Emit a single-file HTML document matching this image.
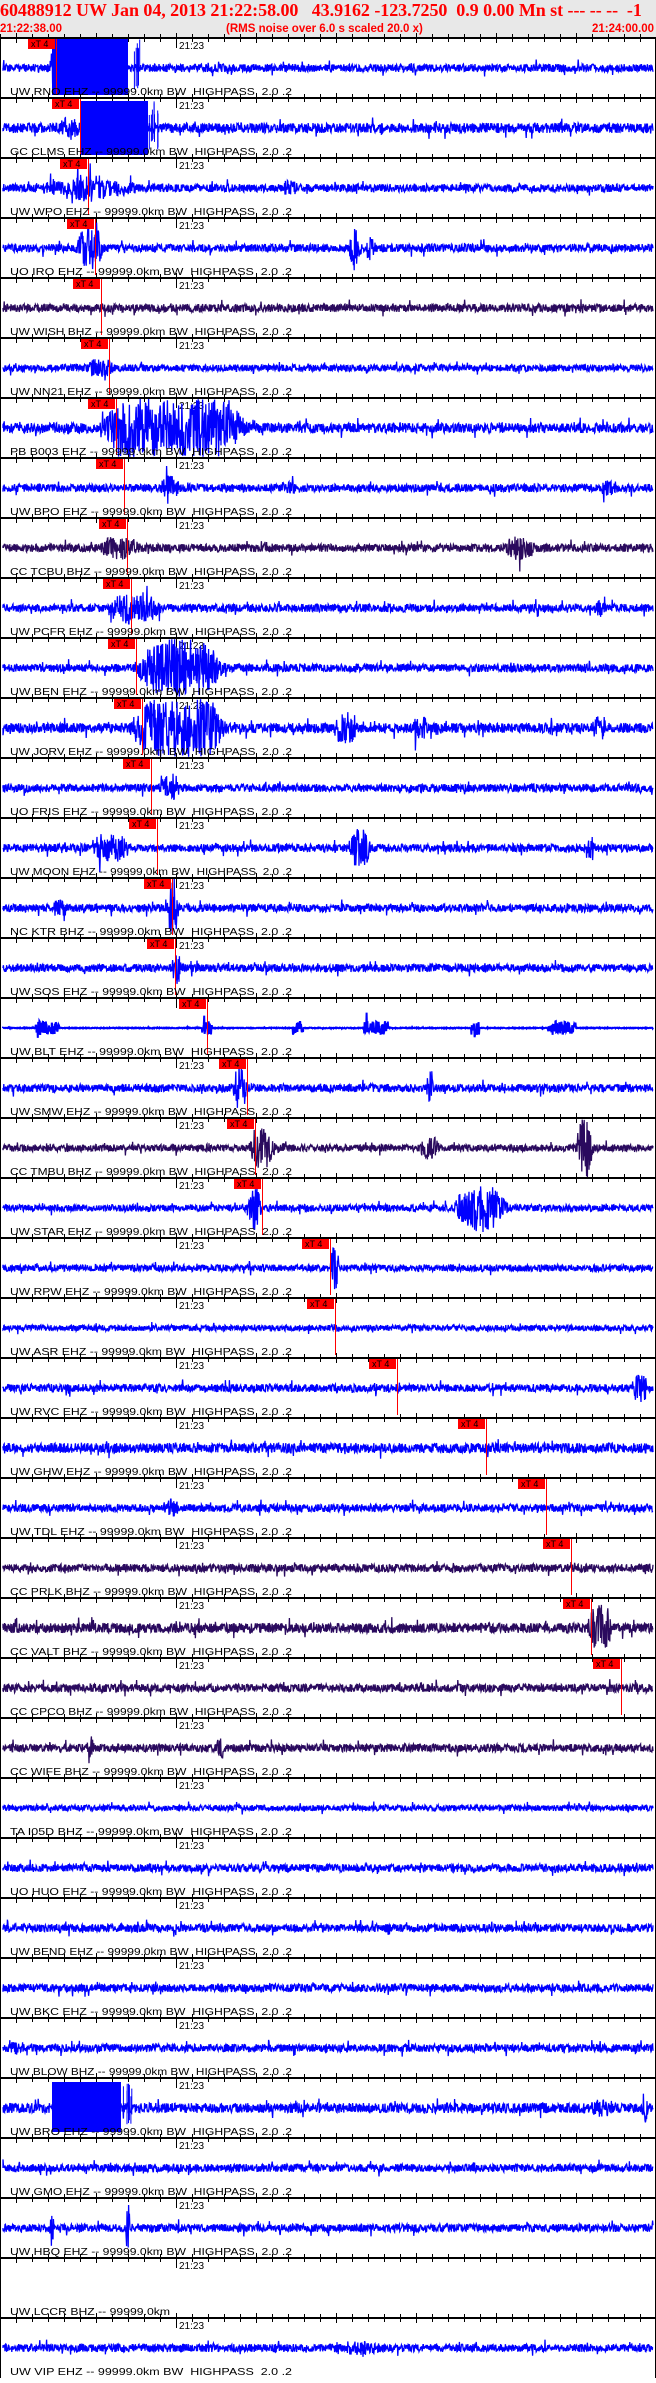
<!DOCTYPE html>
<html><head><meta charset="utf-8"><style>
html,body{margin:0;padding:0;background:#fff;width:656px;height:2378px;overflow:hidden}
#hdr{position:absolute;left:0;top:0;width:656px;height:37px;background:#e8e8e8}
#l1{position:absolute;left:0;top:0px;font:bold 18px "Liberation Serif",serif;color:#f00;white-space:pre;letter-spacing:-0.05px}
#l2{position:absolute;left:0;top:23px;width:656px;font:bold 11.5px "Liberation Sans",sans-serif;color:#f00}
#wrap{position:absolute;left:0;top:0;width:656px;height:2378px}
</style></head><body>
<div id="hdr"><div id="l1">60488912 UW Jan 04, 2013 21:22:58.00   43.9162 -123.7250  0.9 0.00 Mn st --- -- --  -1</div>
<div id="l2"><span style="position:absolute;left:0">21:22:38.00</span><span style="position:absolute;left:226px">(RMS noise over 6.0 s scaled 20.0 x)</span><span style="position:absolute;right:2px">21:24:00.00</span></div></div>
<div id="wrap"></div>
<script>
(function(){
var names=["UW RNO EHZ","GC CLMS EHZ","UW WPO EHZ","UO IRO EHZ","UW WISH BHZ","UW NN21 EHZ","PB B003 EHZ","UW BPO EHZ","CC TCBU BHZ","UW PCFR EHZ","UW BEN EHZ","UW JORV EHZ","UO FRIS EHZ","UW MOON EHZ","NC KTR BHZ","UW SOS EHZ","UW BLT EHZ","UW SMW EHZ","CC TMBU BHZ","UW STAR EHZ","UW RPW EHZ","UW ASR EHZ","UW RVC EHZ","UW GHW EHZ","UW TDL EHZ","CC PRLK BHZ","CC VALT BHZ","CC CPCO BHZ","CC WIFE BHZ","TA I05D BHZ","UO HUO EHZ","UW BEND EHZ","UW BKC EHZ","UW BLOW BHZ","UW BRO EHZ","UW GMO EHZ","UW HBQ EHZ","UW LCCR BHZ","UW VIP EHZ"];
var picks=[56,80,88,95,101,109,116,124,127,131,136,142,151,157,172,175,207,247,255,262,330,335,397,486,546,571,591,621];
var dark={4:1,8:1,18:1,25:1,26:1,27:1,28:1};
var base=[4,5,4,4,4,3.5,5,4,4,4,4,5,4,4,4,4,0.7,4,3.5,3.5,3.5,3,4,5,4,4,5,4,4,3,4,4,4,4,5,4,4,0,4];
var ev={0:[[56,6,25]],1:[[70,10,12]],2:[[90,20,14],[60,30,7],[110,30,8],[290,8,8]],3:[[90,12,22],[355,6,20],[370,4,14]],5:[[100,15,9]],6:[[174,60,60]],7:[[170,10,12],[290,10,7],[610,10,8]],8:[[120,20,12],[520,15,12]],9:[[135,25,16],[600,6,9]],10:[[180,40,29]],11:[[178,40,50],[345,12,16],[420,8,12],[600,8,12]],12:[[170,10,12]],13:[[110,20,14],[360,10,20],[590,5,14]],14:[[173,5,27],[60,8,9]],15:[[177,5,16]],17:[[240,6,24],[430,3,20]],18:[[262,12,20],[585,8,30],[430,10,12]],19:[[480,25,24],[255,6,22]],20:[[335,4,24]],22:[[640,8,14]],24:[[170,10,9]],26:[[600,12,24]],28:[[90,3,18],[220,3,12]],33:[[15,5,7]],34:[[600,10,9],[645,3,16]],36:[[52,2,22],[128,2,24]],38:[[355,30,7]]};
var solid={0:[52,128,2,58],1:[80,148,4,58],34:[52,121,5,55]};
var blt=[[47,12],[207,5],[298,5],[376,12],[475,4],[562,14]];
var s=12345;function r(){s=(s*16807)%2147483647;return s/2147483647;}
var o='';
for(var i=0;i<39;i++){
 var top=37+60*i, mid=top+31;
 var col=dark[i]?'#2a0a5e':'#0000ff';
 o+='<rect x="0" y="'+top+'" width="656" height="2" fill="#000"/>';
 for(var x=0;x<656;x+=16){var maj=((x-176)%80==0);var h=maj?4:3;o+='<rect x="'+x+'" y="'+(top-h)+'" width="1" height="'+(2*h+2)+'" fill="#000"/>';}
 o+='<rect x="176" y="'+top+'" width="1" height="11" fill="#000"/>';
 o+='<text x="179" y="'+(top+12)+'" font-family="Liberation Sans,sans-serif" font-size="10" fill="#000">21:23</text>';
 if(i!=37){
  var d='M3 '+mid;
  for(var x=3;x<653;x+=0.4){
   var a=base[i];
   if(i==16){a=0.4;for(var k=0;k<blt.length;k++){if(Math.abs(x-blt[k][0])<blt[k][1])a=7;}}
   var e=ev[i]||[];
   for(var k=0;k<e.length;k++){var dx=Math.abs(x-e[k][0]);if(dx<e[k][1]*2){var v=e[k][2]*Math.exp(-Math.pow(dx/e[k][1],4));if(v>a)a=v;}}
   if(r()<0.03)a*=2.2;
   a=Math.min(a,29);
   var y=mid+(r()*2-1)*a;
   d+=' L'+x.toFixed(1)+' '+y.toFixed(1);
  }
  o+='<path d="'+d+'" stroke="'+col+'" stroke-width="'+(i==16?2:1.3)+'" fill="none"/>';
  if(solid[i]){var q=solid[i];o+='<rect x="'+q[0]+'" y="'+(top+q[2])+'" width="'+(q[1]-q[0])+'" height="'+(q[3]-q[2])+'" fill="#0000ff"/>';
   for(var k=0;k<8;k++){var xx=q[1]+r()*12;o+='<rect x="'+xx.toFixed(1)+'" y="'+(top+q[2]+r()*15).toFixed(1)+'" width="1" height="'+(25+r()*15).toFixed(1)+'" fill="#0000ff"/>';}}
 }
 if(i<picks.length){var px=picks[i];
  o+='<rect x="'+(px-28)+'" y="'+(top+2)+'" width="27" height="10" fill="#f00"/>';
  o+='<text x="'+(px-25)+'" y="'+(top+10)+'" font-family="Liberation Sans,sans-serif" font-size="9" fill="#000">xT 4</text>';
  o+='<rect x="'+px+'" y="'+(top+2)+'" width="1" height="56" fill="#f00"/>';
 }
 var lab=names[i]+' -- 99999.0km'+(i==37?'':' BW  HIGHPASS  2.0 .2');
 o+='<text x="10" y="'+(top+58)+'" font-family="Liberation Sans,sans-serif" font-size="10.5" fill="#000" textLength="'+(i==37?160:282)+'" lengthAdjust="spacingAndGlyphs" xml:space="preserve">'+lab+'</text>';
}
o+='<rect x="0" y="37" width="1" height="2341" fill="#000"/><rect x="655" y="37" width="1" height="2341" fill="#000"/>';
document.getElementById('wrap').innerHTML='<svg width="656" height="2378" xmlns="http://www.w3.org/2000/svg">'+o+'</svg>';
})();
</script>
</body></html>
